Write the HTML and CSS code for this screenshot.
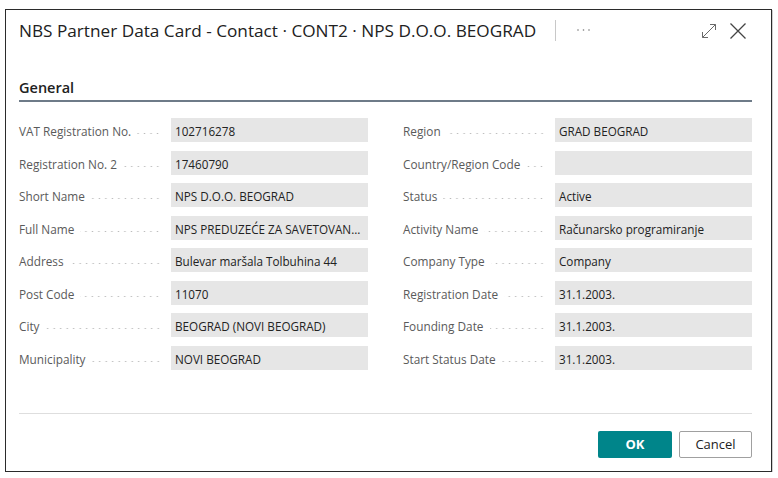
FILE: index.html
```html
<!DOCTYPE html>
<html>
<head>
<meta charset="utf-8">
<link rel="stylesheet" href="styles.css">
</head>
<body>
<div class="dialog">
  <div class="header">
    <div class="title">NBS Partner Data Card - Contact · CONT2 · NPS D.O.O. BEOGRAD</div>
    <div class="vsep"></div>
    <svg class="more" width="16" height="4" viewBox="0 0 16 4">
      <circle cx="2" cy="2" r="0.8" fill="#777"/>
      <circle cx="7.5" cy="2" r="0.8" fill="#777"/>
      <circle cx="13" cy="2" r="0.8" fill="#777"/>
    </svg>
    <div class="spacer"></div>
    <svg class="icon expand" width="16" height="16" viewBox="0 0 16 16">
      <path d="M1.5 14.5 L14.5 1.5 M9 1.5 H14.5 V7 M1.5 9 V14.5 H7" fill="none" stroke="#6a6a6a" stroke-width="1"/>
    </svg>
    <svg class="icon close" width="18" height="18" viewBox="0 0 18 18">
      <path d="M1.5 1.5 L16.5 16.5 M16.5 1.5 L1.5 16.5" fill="none" stroke="#444" stroke-width="1.3"/>
    </svg>
  </div>
  <div class="section">General</div>
  <div class="fields">
    <div class="col">
      <div class="row"><div class="label"><span>VAT Registration No.</span><i></i></div><div class="value">102716278</div></div>
      <div class="row"><div class="label"><span>Registration No. 2</span><i></i></div><div class="value">17460790</div></div>
      <div class="row"><div class="label"><span>Short Name</span><i></i></div><div class="value">NPS D.O.O. BEOGRAD</div></div>
      <div class="row"><div class="label"><span>Full Name</span><i></i></div><div class="value">NPS PREDUZEĆE ZA SAVETOVANJE I PROGRAMIRANJE</div></div>
      <div class="row"><div class="label"><span>Address</span><i></i></div><div class="value">Bulevar maršala Tolbuhina 44</div></div>
      <div class="row"><div class="label"><span>Post Code</span><i></i></div><div class="value">11070</div></div>
      <div class="row"><div class="label"><span>City</span><i></i></div><div class="value">BEOGRAD (NOVI BEOGRAD)</div></div>
      <div class="row"><div class="label"><span>Municipality</span><i></i></div><div class="value">NOVI BEOGRAD</div></div>
    </div>
    <div class="col">
      <div class="row"><div class="label"><span>Region</span><i></i></div><div class="value">GRAD BEOGRAD</div></div>
      <div class="row"><div class="label"><span>Country/Region Code</span><i></i></div><div class="value"></div></div>
      <div class="row"><div class="label"><span>Status</span><i></i></div><div class="value">Active</div></div>
      <div class="row"><div class="label"><span>Activity Name</span><i></i></div><div class="value">Računarsko programiranje</div></div>
      <div class="row"><div class="label"><span>Company Type</span><i></i></div><div class="value">Company</div></div>
      <div class="row"><div class="label"><span>Registration Date</span><i></i></div><div class="value">31.1.2003.</div></div>
      <div class="row"><div class="label"><span>Founding Date</span><i></i></div><div class="value">31.1.2003.</div></div>
      <div class="row"><div class="label"><span>Start Status Date</span><i></i></div><div class="value">31.1.2003.</div></div>
    </div>
  </div>
  <div class="footer">
    <button class="btn ok">OK</button>
    <button class="btn cancel">Cancel</button>
  </div>
</div>
</body>
</html>
```
FILE: styles.css
```css
* { box-sizing: border-box; }
body {
  margin: 0;
  background: #fff;
  font-family: "Segoe UI", "Open Sans", sans-serif;
  color: #212121;
}
.dialog {
  margin: 9px 0 0 5px;
  width: 767px;
  height: 463px;
  border: 1px solid #2b2b2b;
  box-shadow: 1px 1px 0 #d0d0d0;
  padding: 0 19px 0 13px;
  display: flex;
  flex-direction: column;
}
.header {
  height: 41px;
  display: flex;
  align-items: center;
}
.title {
  font-size: 17.2px;
  color: #212121;
  white-space: nowrap;
}
.vsep {
  width: 1px;
  height: 21px;
  background: #c8c8c8;
  margin-left: 19px;
}
.more {
  display: block;
  margin-left: 20px;
  margin-bottom: 1px;
}
.spacer { flex: 1; }
.icon { display: block; }
.expand { margin-right: 12px; }
.close { margin-right: 5px; }
.section {
  margin-top: 27px;
  font-size: 14.5px;
  font-weight: 600;
  color: #212121;
  padding-bottom: 3px;
  border-bottom: 2px solid #6e7b88;
}
.fields {
  margin-top: 16px;
  display: grid;
  grid-template-columns: 349px 349px;
  column-gap: 35px;
}
.col {
  display: flex;
  flex-direction: column;
  row-gap: 8.5px;
}
.row {
  display: flex;
  height: 24px;
  align-items: center;
}
.label {
  width: 152px;
  display: flex;
  align-items: center;
  padding-right: 10px;
  padding-top: 2px;
  font-size: 11.8px;
  color: #5a5a5a;
  white-space: nowrap;
}
.label i {
  flex: 1;
  height: 3px;
  margin-left: 6px;
  margin-top: 5px;
  background-image: radial-gradient(circle, #b8b8b8 0.7px, transparent 1px);
  background-size: 6.5px 3px;
  background-repeat: repeat-x;
  background-position: right center;
}
.value {
  width: 197px;
  height: 24px;
  background: #e6e6e6;
  font-size: 11.7px;
  color: #222;
  padding: 1px 5px 0 4px;
  line-height: 24px;
  white-space: nowrap;
  overflow: hidden;
  text-overflow: ellipsis;
}
.footer {
  margin-top: 43px;
  border-top: 1px solid #dedede;
  padding-top: 17px;
  display: flex;
  justify-content: flex-end;
  gap: 7px;
}
.btn {
  height: 27px;
  font-family: inherit;
  font-size: 13px;
  border-radius: 2px;
}
.ok {
  width: 74px;
  background: #00858a;
  color: #fff;
  border: none;
  font-weight: 700;
}
.cancel {
  width: 73px;
  background: #fff;
  color: #222;
  border: 1px solid #a0a0a0;
}
```
